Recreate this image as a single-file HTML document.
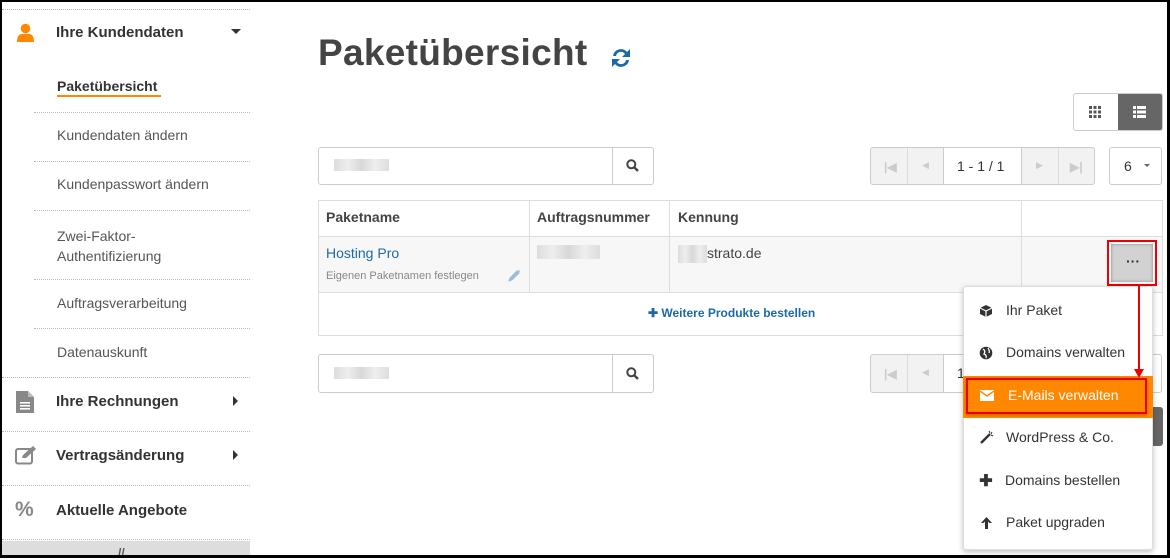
<!DOCTYPE html>
<html><head><meta charset="utf-8"><style>
*{box-sizing:border-box;margin:0;padding:0}
body{width:1170px;height:558px;overflow:hidden;background:#fff;font-family:"Liberation Sans",sans-serif;color:#333;position:relative}
.frame{position:absolute;inset:0;border:2px solid #000;border-right-width:3px;border-bottom-width:3px;z-index:50;pointer-events:none}
.a{position:absolute}
.dot{position:absolute;border-top:1px dotted #bbb;height:0}
.side-h{position:absolute;left:56px;font-size:15px;font-weight:bold;color:#333}
.sub{position:absolute;left:57px;font-size:14px;color:#555}
.box{position:absolute;border:1px solid #ccc;border-radius:3px;background:#fff}
.blur{position:absolute;background:linear-gradient(90deg,#ddd,#eee,#d8d8d8,#eee,#ddd);height:12px}
.mi{position:absolute;left:1006px;font-size:14px;color:#333}
.mic{position:absolute;left:979px;width:14px;text-align:center;font-size:13px;color:#333;font-weight:bold}
</style></head><body>
<div class="frame"></div>
<!-- sidebar -->
<div class="dot" style="left:2px;width:248px;top:9px"></div>
<svg class="a" style="left:17px;top:23px" width="17" height="20" viewBox="0 0 17 20"><circle cx="8.5" cy="5.5" r="4.8" fill="#f80"/><path d="M0 19 Q0 11 5 11 L12 11 Q17 11 17 19Z" fill="#f80"/></svg>
<div class="side-h" style="top:24px">Ihre Kundendaten</div>
<div class="a" style="left:231px;top:29px;border-left:5px solid transparent;border-right:5px solid transparent;border-top:5px solid #333"></div>
<div class="sub" style="top:78px;font-weight:bold;color:#333">Paketübersicht</div>
<div class="a" style="left:57px;top:95px;width:104px;height:2px;background:#f80"></div>
<div class="dot" style="left:34px;width:216px;top:112px"></div>
<div class="sub" style="top:127px">Kundendaten ändern</div>
<div class="dot" style="left:34px;width:216px;top:161px"></div>
<div class="sub" style="top:176px">Kundenpasswort ändern</div>
<div class="dot" style="left:34px;width:216px;top:210px"></div>
<div class="sub" style="top:226px;line-height:20px">Zwei-Faktor-<br>Authentifizierung</div>
<div class="dot" style="left:34px;width:216px;top:279px"></div>
<div class="sub" style="top:295px">Auftragsverarbeitung</div>
<div class="dot" style="left:34px;width:216px;top:328px"></div>
<div class="sub" style="top:344px">Datenauskunft</div>
<div class="dot" style="left:2px;width:248px;top:377px"></div>
<svg class="a" style="left:16px;top:391px" width="18" height="22" viewBox="0 0 18 22"><path d="M0 0H12L18 6V22H0Z" fill="#888"/><path d="M12 0V6H18" fill="#bbb"/><rect x="4" y="11" width="10" height="1.6" fill="#fff"/><rect x="4" y="14" width="10" height="1.6" fill="#fff"/><rect x="4" y="17" width="10" height="1.6" fill="#fff"/></svg>
<div class="side-h" style="top:393px">Ihre Rechnungen</div>
<div class="a" style="left:233px;top:396px;border-top:5px solid transparent;border-bottom:5px solid transparent;border-left:5px solid #333"></div>
<div class="dot" style="left:2px;width:248px;top:431px"></div>
<svg class="a" style="left:15px;top:446px" width="22" height="19" viewBox="0 0 22 19"><rect x="1" y="3" width="16" height="14.5" rx="2" fill="none" stroke="#888" stroke-width="2"/><path d="M7 12 L8 9 L18 0 L21 3 L11 12Z" fill="#888"/></svg>
<div class="side-h" style="top:447px">Vertragsänderung</div>
<div class="a" style="left:233px;top:450px;border-top:5px solid transparent;border-bottom:5px solid transparent;border-left:5px solid #333"></div>
<div class="dot" style="left:2px;width:248px;top:485px"></div>
<div class="a" style="left:15px;top:498px;font-size:21px;font-weight:bold;color:#888">%</div>
<div class="side-h" style="top:502px">Aktuelle Angebote</div>
<div class="dot" style="left:2px;width:248px;top:539px"></div>
<div class="a" style="left:2px;top:541px;width:248px;height:17px;background:#ddd"></div>
<div class="a" style="left:118px;top:546px;font-size:12px;color:#555;font-weight:bold">//</div>
<!-- title -->
<div class="a" style="left:318px;top:32px;font-size:37px;font-weight:bold;color:#444;letter-spacing:0.3px">Paketübersicht</div>
<svg class="a" style="left:609px;top:46px" width="24" height="24" viewBox="0 0 24 24"><path d="M4 10 A8 8 0 0 1 18 6 L21 3 V11 H13 L16 8 A5 5 0 0 0 7 10Z" fill="#1b6aa5"/><path d="M20 14 A8 8 0 0 1 6 18 L3 21 V13 H11 L8 16 A5 5 0 0 0 17 14Z" fill="#1b6aa5"/></svg>
<!-- view toggle -->
<div class="box" style="left:1073px;top:93px;width:90px;height:38px;overflow:hidden"><div class="a" style="left:44px;top:0;width:46px;height:38px;background:#666"></div></div>
<svg class="a" style="left:1089px;top:106px" width="12" height="12"><g fill="#555"><rect x="0" y="0" width="3" height="3"/><rect x="4.5" y="0" width="3" height="3"/><rect x="9" y="0" width="3" height="3"/><rect x="0" y="4.5" width="3" height="3"/><rect x="4.5" y="4.5" width="3" height="3"/><rect x="9" y="4.5" width="3" height="3"/><rect x="0" y="9" width="3" height="3"/><rect x="4.5" y="9" width="3" height="3"/><rect x="9" y="9" width="3" height="3"/></g></svg>
<svg class="a" style="left:1133px;top:106px" width="13" height="12"><g fill="#fff"><rect x="0" y="0" width="3" height="3"/><rect x="4" y="0" width="9" height="3"/><rect x="0" y="4.5" width="3" height="3"/><rect x="4" y="4.5" width="9" height="3"/><rect x="0" y="9" width="3" height="3"/><rect x="4" y="9" width="9" height="3"/></g></svg>
<!-- search 1 -->
<div class="box" style="left:318px;top:147px;width:336px;height:38px"></div>
<div class="a" style="left:612px;top:147px;width:1px;height:38px;background:#ccc"></div>
<div class="blur" style="left:334px;top:159px;width:55px"></div>
<svg class="a" style="left:626px;top:159px" width="13" height="13" viewBox="0 0 13 13"><circle cx="5.3" cy="5.3" r="4" fill="none" stroke="#444" stroke-width="2"/><path d="M8.3 8.3 L12 12" stroke="#444" stroke-width="2.4"/></svg>
<!-- pagination 1 -->
<div class="box" style="left:870px;top:147px;width:225px;height:38px;background:#f2f2f2"></div>
<div class="a" style="left:943px;top:148px;width:79px;height:36px;background:#fff;border-left:1px solid #ccc;border-right:1px solid #ccc"></div>
<div class="a" style="left:907px;top:148px;width:1px;height:36px;background:#ddd"></div>
<div class="a" style="left:1058px;top:148px;width:1px;height:36px;background:#ddd"></div>
<div class="a" style="left:884px;top:160px;font-size:12px;color:#ccc;font-weight:bold">|◀</div>
<div class="a" style="left:922px;top:160px;font-size:9px;color:#ccc">◀</div>
<div class="a" style="left:957px;top:158px;font-size:14px;color:#333">1 - 1 / 1</div>
<div class="a" style="left:1036px;top:160px;font-size:9px;color:#ccc">▶</div>
<div class="a" style="left:1070px;top:160px;font-size:12px;color:#ccc;font-weight:bold">▶|</div>
<div class="box" style="left:1109px;top:147px;width:53px;height:38px"></div>
<div class="a" style="left:1124px;top:158px;font-size:14px">6</div>
<div class="a" style="left:1144px;top:164px;border-left:3px solid transparent;border-right:3px solid transparent;border-top:3px solid #666"></div>
<!-- table -->
<div class="a" style="left:318px;top:200px;width:845px;height:136px;border:1px solid #ddd"></div>
<div class="a" style="left:319px;top:236px;width:843px;height:57px;background:#f7f7f7;border-top:1px solid #ddd;border-bottom:1px solid #ddd"></div>
<div class="a" style="left:529px;top:200px;width:1px;height:93px;background:#ddd"></div>
<div class="a" style="left:669px;top:200px;width:1px;height:93px;background:#ddd"></div>
<div class="a" style="left:1021px;top:200px;width:1px;height:93px;background:#ddd"></div>
<div class="a" style="left:326px;top:209px;font-size:14px;font-weight:bold;color:#444">Paketname</div>
<div class="a" style="left:537px;top:209px;font-size:14px;font-weight:bold;color:#444">Auftragsnummer</div>
<div class="a" style="left:678px;top:209px;font-size:14px;font-weight:bold;color:#444">Kennung</div>
<div class="a" style="left:326px;top:245px;font-size:14px;color:#1b6aa5">Hosting Pro</div>
<div class="a" style="left:326px;top:270px;font-size:11px;color:#888">Eigenen Paketnamen festlegen</div>
<svg class="a" style="left:508px;top:269px" width="13" height="13" viewBox="0 0 13 13"><path d="M1 12 L2 9 L9 2 L11 4 L4 11Z M10 1 L12 3" fill="#9bbbd8" stroke="#9bbbd8"/></svg>
<div class="blur" style="left:537px;top:245px;width:63px;height:14px"></div>
<div class="blur" style="left:678px;top:245px;width:29px;height:18px"></div>
<div class="a" style="left:707px;top:245px;font-size:14px;color:#444">strato.de</div>
<div class="a" style="left:648px;top:306px;font-size:12px;font-weight:bold;color:#1b6aa5">✚ Weitere Produkte bestellen</div>
<!-- dots button -->
<div class="a" style="left:1107px;top:240px;width:50px;height:46px;border:2px solid #e00"></div>
<div class="a" style="left:1111px;top:244px;width:42px;height:38px;background:#d2d2d2;box-shadow:0 0 3px #888 inset"></div>
<div class="a" style="left:1126px;top:253px;font-size:14px;font-weight:bold;color:#333">···</div>
<!-- search 2 -->
<div class="box" style="left:318px;top:354px;width:336px;height:39px"></div>
<div class="a" style="left:612px;top:354px;width:1px;height:39px;background:#ccc"></div>
<div class="blur" style="left:334px;top:367px;width:55px"></div>
<svg class="a" style="left:626px;top:367px" width="13" height="13" viewBox="0 0 13 13"><circle cx="5.3" cy="5.3" r="4" fill="none" stroke="#444" stroke-width="2"/><path d="M8.3 8.3 L12 12" stroke="#444" stroke-width="2.4"/></svg>
<div class="box" style="left:870px;top:354px;width:225px;height:39px;background:#f2f2f2"></div>
<div class="a" style="left:943px;top:355px;width:79px;height:37px;background:#fff;border-left:1px solid #ccc"></div>
<div class="a" style="left:907px;top:355px;width:1px;height:37px;background:#ddd"></div>
<div class="a" style="left:884px;top:367px;font-size:12px;color:#ccc;font-weight:bold">|◀</div>
<div class="a" style="left:922px;top:367px;font-size:9px;color:#ccc">◀</div>
<div class="a" style="left:957px;top:365px;font-size:14px;color:#333">1</div>
<div class="box" style="left:1109px;top:354px;width:53px;height:39px"></div>
<div class="a" style="left:1140px;top:407px;width:23px;height:39px;background:#666;border-radius:3px"></div>
<!-- dropdown -->
<div class="a" style="left:963px;top:286px;width:190px;height:264px;background:#fff;border:1px solid #ddd;border-radius:3px;box-shadow:0 2px 6px rgba(0,0,0,.25)"></div>
<svg class="a" style="left:979px;top:304px" width="14" height="14" viewBox="0 0 14 14"><path d="M7 1 L13 4 V10 L7 13 L1 10 V4Z" fill="#333"/><path d="M7 7 L13 4 M7 7 V13" stroke="#fff" stroke-width="1.2"/><path d="M7 7 L1 4" stroke="#fff" stroke-width="1"/></svg>
<div class="mi" style="top:302px">Ihr Paket</div>
<svg class="a" style="left:979px;top:346px" width="14" height="14" viewBox="0 0 14 14"><circle cx="7" cy="7" r="6.3" fill="#333"/><path d="M4 3 Q7 5 5 8 Q8 9 7 12 M9 2 Q11 5 10 7" stroke="#fff" stroke-width="1.3" fill="none"/></svg>
<div class="mi" style="top:344px">Domains verwalten</div>
<div class="a" style="left:963px;top:376px;width:190px;height:42px;background:#f80"></div>
<div class="a" style="left:966px;top:378px;width:181px;height:36px;border:2px solid #e00;box-shadow:0 1px 3px rgba(0,0,0,.3)"></div>
<svg class="a" style="left:980px;top:390px" width="14" height="11" viewBox="0 0 14 11"><rect width="14" height="11" fill="#fff"/><path d="M0 1 L7 6 L14 1" stroke="#f80" stroke-width="1.4" fill="none"/></svg>
<div class="mi" style="top:387px;left:1008px;color:#fff">E-Mails verwalten</div>
<svg class="a" style="left:980px;top:430px" width="14" height="14" viewBox="0 0 14 14"><path d="M1 13 L10 4" stroke="#333" stroke-width="2.4"/><path d="M9 1 L10 3 M12 2 L11 4 M13 6 L11 5" stroke="#333" stroke-width="1"/></svg>
<div class="mi" style="top:429px">WordPress &amp; Co.</div>
<div class="mic" style="top:471px;font-size:16px">✚</div>
<div class="mi" style="top:472px;left:1005px">Domains bestellen</div>
<svg class="a" style="left:980px;top:516px" width="13" height="14" viewBox="0 0 13 14"><path d="M6.5 1 L12 7 L9.5 7 L8 5.5 V13 H5 V5.5 L3.5 7 L1 7Z" fill="#333"/></svg>
<div class="mi" style="top:514px">Paket upgraden</div>
<!-- red arrow -->
<div class="a" style="left:1138px;top:286px;width:2px;height:84px;background:#e00"></div>
<div class="a" style="left:1134px;top:369px;border-left:5px solid transparent;border-right:5px solid transparent;border-top:9px solid #e00"></div>
</body></html>
